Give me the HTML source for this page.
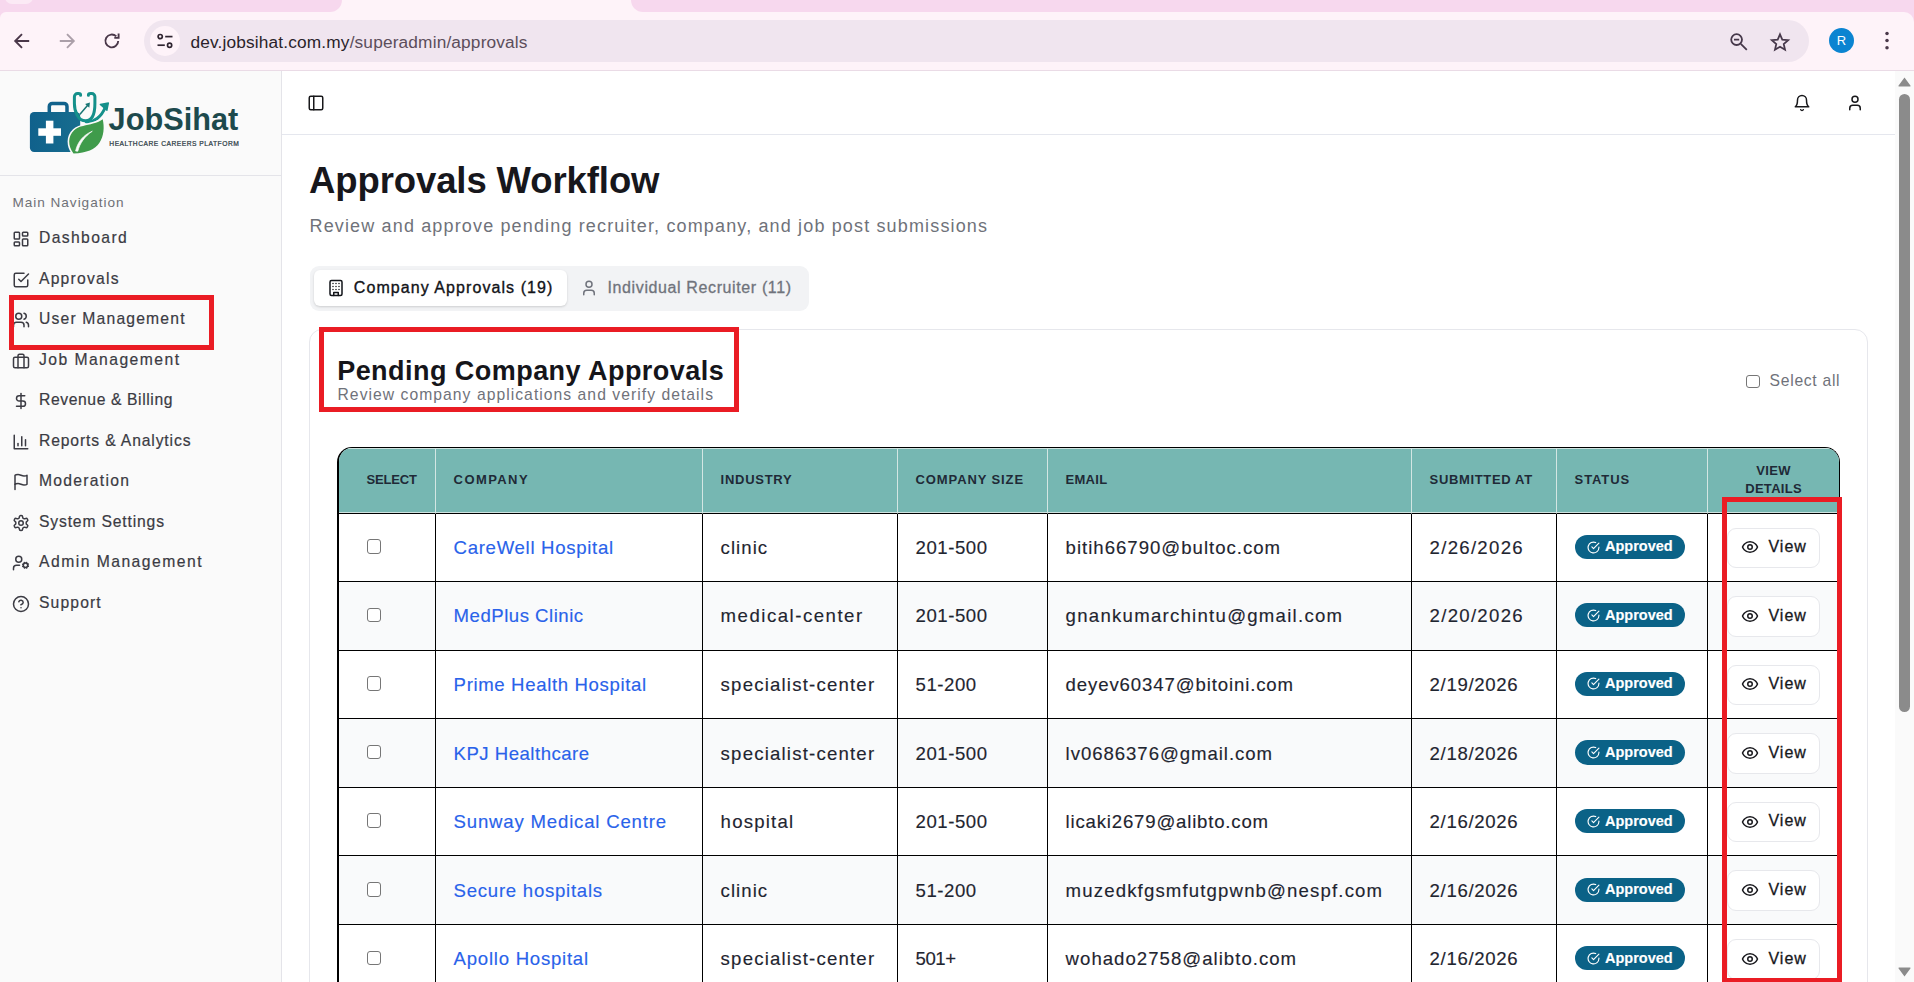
<!DOCTYPE html>
<html lang="en">
<head>
<meta charset="utf-8">
<title>Approvals Workflow - JobSihat</title>
<style>
*{box-sizing:border-box;margin:0;padding:0}
html,body{width:1914px;height:982px;overflow:hidden;background:#fff}
body{position:relative;font-family:"Liberation Sans",sans-serif;color:#1f2937;-webkit-font-smoothing:antialiased}
.abs{position:absolute}
svg{display:block}
.ic{fill:none;stroke:currentColor;stroke-width:2;stroke-linecap:round;stroke-linejoin:round}

/* ---------- browser chrome ---------- */
#tabstrip{left:0;top:0;width:1914px;height:26px;background:#f7d8ee}
#tabstrip .act{left:330px;top:-12px;width:313px;height:24px;background:#fef3f9}
#tabstrip .cl{left:318px;top:-12px;width:24px;height:24px;background:#f7d8ee;border-radius:0 0 12px 0}
#tabstrip .cr{left:631px;top:-12px;width:24px;height:24px;background:#f7d8ee;border-radius:0 0 0 12px}
#tabstrip .fav{left:5px;top:-10px;width:28px;height:14px;border-radius:7px;background:#fbeaf5}
#toolbar{left:0;top:12px;width:1914px;height:59px;background:#fef3f9;border-bottom:1px solid #eadbe6;border-radius:6px 10px 0 0}
#urlpill{left:144px;top:8px;width:1665px;height:42px;border-radius:21px;background:#f0e5ef}
#siteinfo{left:6px;top:6px;width:30px;height:30px;border-radius:15px;background:#fef3f9}
#url{left:46.5px;top:1.2px;height:42px;line-height:42px;font-size:17.3px;color:#2a1f2a;white-space:nowrap;letter-spacing:0}
#url span{color:#5c4e5b}
#avatar{left:1829px;top:16px;width:25px;height:25px;border-radius:50%;background:#0b84d1;color:#fff;font-size:13px;line-height:25px;text-align:center}

/* ---------- sidebar ---------- */
#sidebar{left:0;top:71px;width:282px;height:911px;background:#fafafa;border-right:1px solid #e4e4e9}
#logodiv{left:0;top:104px;width:281px;height:1px;background:#e4e4e9}
#navlabel{left:12.5px;top:123.6px;font-size:13.6px;line-height:16px;color:#6f7177;white-space:nowrap}
.nav{left:12px;height:24px;display:flex;align-items:center;color:#3b3b43;font-size:15.7px;-webkit-text-stroke:.2px #3b3b43;white-space:nowrap}
.nav svg{width:18px;height:18px;margin-right:9px;flex:none;position:relative;top:1.1px}
.nav span{display:block;line-height:24px;position:relative;top:0px}

/* ---------- header ---------- */
#header{left:282px;top:71px;width:1613px;height:64px;border-bottom:1px solid #e5e7ee;background:#fff}
#scroll{left:1895px;top:71px;width:19px;height:911px;background:#fafafa}
#thumb{left:4px;top:23px;width:11px;height:618px;border-radius:5.5px;background:#8b8b8b}

.redbox{border:5px solid #ea1c24;pointer-events:none}

/* ---------- main content (coords relative to #main at 282,135) ---------- */
.t{position:absolute;white-space:nowrap;display:block}
#h1{left:27px;top:23.9px;font-size:36.5px;line-height:44px;font-weight:700;color:#17171c}
#sub{left:27.5px;top:78.9px;font-size:18px;line-height:24px;color:#6f727a}
#tabs{left:27.5px;top:131px;width:499px;height:45px;border-radius:9px;background:#f2f3f5}
#tab1{left:4.5px;top:4px;width:253px;height:35.5px;border-radius:6px;background:#fff;box-shadow:0 1px 3px rgba(0,0,0,.10),0 1px 2px rgba(0,0,0,.06)}
#tab1t{left:44.3px;top:9.5px;font-size:16px;line-height:24px;color:#111318;-webkit-text-stroke:.35px #111318}
#tab2t{left:298px;top:9.5px;font-size:16px;line-height:24px;color:#70737c;-webkit-text-stroke:.3px #70737c}
#card{left:27px;top:193.6px;width:1559px;height:700px;border:1px solid #e6e7ec;border-radius:13px;background:#fff}
#h2{left:55.2px;top:218px;font-size:27px;line-height:36px;font-weight:700;color:#15151a}
#sub2{left:55.5px;top:249.2px;font-size:15.7px;line-height:22px;color:#6f727a}
#selall{left:1464px;top:239.5px;width:13.5px;height:13.5px;border:1.3px solid #767676;border-radius:3px;background:#fff}
#selallt{left:1487.6px;top:234px;font-size:15.7px;line-height:24px;color:#6f727a}

#tbl{left:55px;top:312px;width:1502.5px;height:700px;border:1.5px solid #000;border-left-width:2px;border-bottom:0;border-radius:15px 15px 0 0;overflow:hidden;background:#fff}
table{border-collapse:separate;border-spacing:0;table-layout:fixed;width:1500.1px}
th{background:#76b7b2;height:65.8px;border-right:1px solid #d3e6e3;border-bottom:1.5px solid #000;border-top:1px solid #cfe3e0;text-align:left;padding:0 0 0 17.5px;font-size:13px;line-height:18px;font-weight:700;color:#1f2a37;text-transform:uppercase;vertical-align:middle;position:relative;box-shadow:inset 0 -1px 0 #cfe3e0}
th:last-child,td:last-child{border-right:0}
th:first-child{padding-left:27.5px}
th span{position:relative;top:-.8px;display:inline-block;white-space:nowrap}
td{border-right:1.3px solid #000;border-bottom:1.3px solid #000;padding:0 0 0 17.5px;font-size:18.6px;color:#1f2530;-webkit-text-stroke:.15px currentColor;vertical-align:middle;position:relative;white-space:nowrap}
tr.alt td{background:#f9fafb}
td span.x{display:inline-block;position:relative;top:.6px}
td a{color:#2962ea;text-decoration:none}
.cb{position:absolute;left:27.5px;top:25.6px;width:14.5px;height:14.5px;border:1.3px solid #767676;border-radius:3px;background:#fff}
.badge{position:absolute;left:17.5px;top:21.2px;width:110px;height:24.2px;border-radius:13px;background:#0b6287;color:#fff;font-weight:700;font-size:14.5px;line-height:24px;white-space:nowrap}
.badge svg{position:absolute;left:12.3px;top:5.6px;width:13px;height:13px;stroke-width:2.1}
.badge span{position:absolute;left:30.5px;top:-.5px}
.vbtn{position:absolute;left:19px;top:14px;width:93px;height:40.5px;border:1px solid #e7e8ec;border-radius:9px;background:#fff;color:#17171c;font-size:16px;line-height:38px;white-space:nowrap}
.vbtn svg{position:absolute;left:12.5px;top:9.7px;width:18px;height:18px;stroke-width:2}
.vbtn span{position:absolute;left:40.3px;top:-.4px;-webkit-text-stroke:.3px #17171c}
/* fitted letter-spacing */
#n0t{letter-spacing:1.369px}
#n1t{letter-spacing:1.217px}
#n2t{letter-spacing:1.175px}
#n3t{letter-spacing:1.445px}
#n4t{letter-spacing:0.604px}
#n5t{letter-spacing:0.859px}
#n6t{letter-spacing:1.280px}
#n7t{letter-spacing:0.833px}
#n8t{letter-spacing:1.473px}
#n9t{letter-spacing:1.124px}
#h1{letter-spacing:-0.101px}
#sub{letter-spacing:1.150px}
#tab1t{letter-spacing:1.067px}
#tab2t{letter-spacing:0.618px}
#h2{letter-spacing:0.456px}
#sub2{letter-spacing:1.039px}
#selallt{letter-spacing:0.705px}
#th0{letter-spacing:-0.159px}
#th1{letter-spacing:1.419px}
#th2{letter-spacing:0.719px}
#th3{letter-spacing:0.885px}
#th4{letter-spacing:0.262px}
#th5{letter-spacing:0.652px}
#th6{letter-spacing:0.884px}
#th7{letter-spacing:0.307px}
#c0{letter-spacing:0.689px}
#i0{letter-spacing:1.034px}
#s0{letter-spacing:0.542px}
#e0{letter-spacing:0.995px}
#d0{letter-spacing:1.285px}
#b0{letter-spacing:-0.025px}
#v0{letter-spacing:1.036px}
#c1{letter-spacing:0.502px}
#i1{letter-spacing:1.504px}
#s1{letter-spacing:0.542px}
#e1{letter-spacing:1.260px}
#d1{letter-spacing:1.285px}
#b1{letter-spacing:-0.025px}
#v1{letter-spacing:1.036px}
#c2{letter-spacing:0.634px}
#i2{letter-spacing:1.197px}
#s2{letter-spacing:0.519px}
#e2{letter-spacing:0.877px}
#d2{letter-spacing:0.660px}
#b2{letter-spacing:-0.025px}
#v2{letter-spacing:1.036px}
#c3{letter-spacing:0.486px}
#i3{letter-spacing:1.197px}
#s3{letter-spacing:0.542px}
#e3{letter-spacing:0.949px}
#d3{letter-spacing:0.660px}
#b3{letter-spacing:-0.025px}
#v3{letter-spacing:1.036px}
#c4{letter-spacing:0.806px}
#i4{letter-spacing:1.201px}
#s4{letter-spacing:0.542px}
#e4{letter-spacing:0.809px}
#d4{letter-spacing:0.660px}
#b4{letter-spacing:-0.025px}
#v4{letter-spacing:1.036px}
#c5{letter-spacing:0.735px}
#i5{letter-spacing:1.034px}
#s5{letter-spacing:0.519px}
#e5{letter-spacing:1.147px}
#d5{letter-spacing:0.660px}
#b5{letter-spacing:-0.025px}
#v5{letter-spacing:1.036px}
#c6{letter-spacing:0.748px}
#i6{letter-spacing:1.197px}
#s6{letter-spacing:-0.464px}
#e6{letter-spacing:1.019px}
#d6{letter-spacing:0.660px}
#b6{letter-spacing:-0.025px}
#v6{letter-spacing:1.036px}
#url{letter-spacing:0.152px}
#navlabel{letter-spacing:0.965px}
</style>
</head>
<body>

<!-- ================= BROWSER CHROME ================= -->
<div id="tabstrip" class="abs">
  <div class="act abs"></div><div class="cl abs"></div><div class="cr abs"></div><div class="fav abs"></div>
</div>
<div id="toolbar" class="abs">
  <!-- back -->
  <svg class="abs" style="left:13px;top:20px" width="18" height="18" viewBox="0 0 18 18"><path d="M16.2 9H2.6M9 2.2 2.2 9 9 15.8" fill="none" stroke="#4a3749" stroke-width="1.9"/></svg>
  <!-- forward -->
  <svg class="abs" style="left:58px;top:20px" width="18" height="18" viewBox="0 0 18 18"><path d="M1.8 9h13.6M9 2.2 15.8 9 9 15.8" fill="none" stroke="#ab9fa9" stroke-width="1.9"/></svg>
  <!-- reload -->
  <svg class="abs" style="left:102px;top:19px" width="20" height="20" viewBox="0 0 20 20"><path d="M16.2 10a6.4 6.4 0 1 1-1.9-4.6" fill="none" stroke="#4a3749" stroke-width="1.9"/><path d="M16.6 2.6v4.3h-4.3" fill="none" stroke="#4a3749" stroke-width="1.9"/></svg>
  <div id="urlpill" class="abs">
    <div id="siteinfo" class="abs">
      <svg class="abs" style="left:6px;top:7px" width="18" height="16" viewBox="0 0 18 16"><g fill="none" stroke="#2f2430" stroke-width="1.7"><circle cx="4.2" cy="3.6" r="2.1"/><path d="M9.2 3.6h7.3"/><circle cx="13.6" cy="12.2" r="2.1"/><path d="M1.5 12.2h7.3"/></g></svg>
    </div>
    <div id="url" class="abs">dev.jobsihat.com.my<span>/superadmin/approvals</span></div>
    <!-- zoom out -->
    <svg class="abs" style="left:1585px;top:12px" width="20" height="20" viewBox="0 0 20 20"><g fill="none" stroke="#46384a" stroke-width="1.8"><circle cx="7.6" cy="7.6" r="5.4"/><path d="M11.8 11.8l6 6M5 7.6h5.2"/></g></svg>
    <!-- star -->
    <svg class="abs" style="left:1625px;top:11px" width="22" height="22" viewBox="0 0 24 24"><path d="M12 3.6l2.5 5.9 6.4.55-4.85 4.2 1.45 6.25L12 17.2l-5.5 3.3 1.45-6.25L3.1 10.05l6.4-.55z" fill="none" stroke="#46384a" stroke-width="1.9" stroke-linejoin="miter"/></svg>
  </div>
  <div id="avatar" class="abs">R</div>
  <svg class="abs" style="left:1883px;top:17px" width="8" height="24" viewBox="0 0 8 24"><g fill="#4a3749"><circle cx="4" cy="4.4" r="1.75"/><circle cx="4" cy="11.6" r="1.75"/><circle cx="4" cy="18.8" r="1.75"/></g></svg>
</div>

<!-- ================= SIDEBAR ================= -->
<div id="sidebar" class="abs">
  <svg id="logo" class="abs" style="left:0;top:0" width="281" height="104" viewBox="0 71 281 104">
    <defs><linearGradient id="bagg" x1="0" y1="0" x2="1" y2="0"><stop offset="0" stop-color="#10618c"/><stop offset="1" stop-color="#176d8e"/></linearGradient></defs>
    <!-- medical bag -->
    <path d="M49.300 113v-6.600a3 3 0 0 1 3-3h11.700a3 3 0 0 1 3 3V113" fill="none" stroke="#11628c" stroke-width="3.500"/>
    <rect x="29.900" y="111.900" width="50.300" height="40.100" rx="4.200" fill="url(#bagg)"/>
    <rect x="38.300" y="128.300" width="22.700" height="7.500" fill="#fff"/><rect x="45.900" y="120.700" width="7.500" height="22.800" fill="#fff"/>
    <!-- stethoscope + growth arrow -->
    <g fill="none" stroke="#14908a" stroke-width="3" stroke-linecap="round" stroke-linejoin="round">
      <path d="M80.600 95.300c0-1.300-.700-1.700-2-1.700h-1.100a3.100 3.100 0 0 0-3.100 3.100V103.500c0 8 3.700 17.300 11.200 17.300s9.300-9.300 9.300-17.300V96.700a3.100 3.100 0 0 0-3.100-3.100h-1.300c-1.400 0-2.100.400-2.100 1.700"/>
      <path d="M86.200 121.700c7.500 1.500 15.300-5.200 19-14.200"/>
    </g>
    <path d="M100.300 104.500 108.400 103 106.900 110.300z" fill="#14908a" stroke="#14908a" stroke-width="1.300" stroke-linejoin="round"/>
    <path d="M80.200 114 88.300 104.500" fill="none" stroke="#187674" stroke-width="1.500" stroke-linecap="round"/>
    <path d="M85.100 103.900 89.900 102.600 89.300 107.700z" fill="#187674"/>
    <!-- leaf -->
    <path d="M73.500 153.500C67.800 146 67.500 136.500 74.100 130.300 79 125.800 87 125.500 93 123.600 97 122.300 100.500 121 102.700 119.200 104.500 127 104 136 99.300 142.900 95 149.200 87 152.800 73.500 153.500z" fill="#3f9b4b" stroke="#fafafa" stroke-width="3.200" paint-order="stroke" stroke-linejoin="round"/>
    <path d="M75.600 151C77.600 142 83 135.200 92.300 131.200 84.500 136.700 80 142.800 77.800 151.200z" fill="#fafafa" stroke="#fafafa" stroke-width=".7" stroke-linejoin="round"/>
    <!-- wordmark -->
    <text x="108.600" y="129.900" font-family="'Liberation Sans',sans-serif" font-weight="700" font-size="31" fill="#1d4a4d" textLength="129.600" lengthAdjust="spacingAndGlyphs">JobSihat</text>
    <text x="109.300" y="145.900" font-family="'Liberation Sans',sans-serif" font-weight="400" font-size="6.700" fill="#2b3a44" stroke="#2b3a44" stroke-width=".22" textLength="129.500" lengthAdjust="spacing">HEALTHCARE CAREERS PLATFORM</text>
  </svg>

  <div id="logodiv" class="abs"></div>
  <div id="navlabel" class="abs">Main Navigation</div>
  <div class="nav abs" style="top:155.3px"><svg class="ic" viewBox="0 0 24 24"><rect width="7" height="9" x="3" y="3" rx="1"/><rect width="7" height="5" x="14" y="3" rx="1"/><rect width="7" height="9" x="14" y="12" rx="1"/><rect width="7" height="5" x="3" y="16" rx="1"/></svg><span id="n0t">Dashboard</span></div>
  <div class="nav abs" style="top:195.8px"><svg class="ic" viewBox="0 0 24 24"><path d="m9 11 3 3L22 4"/><path d="M21 12v7a2 2 0 0 1-2 2H5a2 2 0 0 1-2-2V5a2 2 0 0 1 2-2h11"/></svg><span id="n1t">Approvals</span></div>
  <div class="nav abs" style="top:236.3px"><svg class="ic" viewBox="0 0 24 24"><path d="M16 21v-2a4 4 0 0 0-4-4H6a4 4 0 0 0-4 4v2"/><circle cx="9" cy="7" r="4"/><path d="M22 21v-2a4 4 0 0 0-3-3.87"/><path d="M16 3.13a4 4 0 0 1 0 7.75"/></svg><span id="n2t">User Management</span></div>
  <div class="nav abs" style="top:276.8px"><svg class="ic" viewBox="0 0 24 24"><rect width="20" height="14" x="2" y="7" rx="2" ry="2"/><path d="M16 21V5a2 2 0 0 0-2-2h-4a2 2 0 0 0-2 2v16"/></svg><span id="n3t">Job Management</span></div>
  <div class="nav abs" style="top:317.3px"><svg class="ic" viewBox="0 0 24 24"><line x1="12" x2="12" y1="2" y2="22"/><path d="M17 5H9.5a3.5 3.5 0 0 0 0 7h5a3.5 3.5 0 0 1 0 7H6"/></svg><span id="n4t">Revenue &amp; Billing</span></div>
  <div class="nav abs" style="top:357.8px"><svg class="ic" viewBox="0 0 24 24"><path d="M3 3v18h18"/><path d="M18 17V9"/><path d="M13 17V5"/><path d="M8 17v-3"/></svg><span id="n5t">Reports &amp; Analytics</span></div>
  <div class="nav abs" style="top:398.3px"><svg class="ic" viewBox="0 0 24 24"><path d="M4 15s1-1 4-1 5 2 8 2 4-1 4-1V3s-1 1-4 1-5-2-8-2-4 1-4 1z"/><line x1="4" x2="4" y1="22" y2="15"/></svg><span id="n6t">Moderation</span></div>
  <div class="nav abs" style="top:438.8px"><svg class="ic" viewBox="0 0 24 24"><path d="M12.22 2h-.44a2 2 0 0 0-2 2v.18a2 2 0 0 1-1 1.73l-.43.25a2 2 0 0 1-2 0l-.15-.08a2 2 0 0 0-2.73.73l-.22.38a2 2 0 0 0 .73 2.73l.15.1a2 2 0 0 1 1 1.72v.51a2 2 0 0 1-1 1.74l-.15.09a2 2 0 0 0-.73 2.73l.22.38a2 2 0 0 0 2.73.73l.15-.08a2 2 0 0 1 2 0l.43.25a2 2 0 0 1 1 1.73V20a2 2 0 0 0 2 2h.44a2 2 0 0 0 2-2v-.18a2 2 0 0 1 1-1.73l.43-.25a2 2 0 0 1 2 0l.15.08a2 2 0 0 0 2.73-.73l.22-.39a2 2 0 0 0-.73-2.73l-.15-.08a2 2 0 0 1-1-1.74v-.5a2 2 0 0 1 1-1.74l.15-.09a2 2 0 0 0 .73-2.73l-.22-.38a2 2 0 0 0-2.73-.73l-.15.08a2 2 0 0 1-2 0l-.43-.25a2 2 0 0 1-1-1.73V4a2 2 0 0 0-2-2z"/><circle cx="12" cy="12" r="3"/></svg><span id="n7t">System Settings</span></div>
  <div class="nav abs" style="top:479.3px"><svg class="ic" viewBox="0 0 24 24"><circle cx="18" cy="15" r="3"/><circle cx="9" cy="7" r="4"/><path d="M10 15H6a4 4 0 0 0-4 4v2"/><path d="m21.7 16.4-.9-.3"/><path d="m15.2 13.9-.9-.3"/><path d="m16.6 18.7.3-.9"/><path d="m19.1 12.2.3-.9"/><path d="m19.6 18.7-.4-1"/><path d="m16.8 12.3-.4-1"/><path d="m14.3 16.6 1-.4"/><path d="m20.7 13.8 1-.4"/></svg><span id="n8t">Admin Management</span></div>
  <div class="nav abs" style="top:519.8px"><svg class="ic" viewBox="0 0 24 24"><circle cx="12" cy="12" r="10"/><path d="M9.09 9a3 3 0 0 1 5.83 1c0 2-3 3-3 3"/><path d="M12 17h.01"/></svg><span id="n9t">Support</span></div>
</div>

<!-- ================= HEADER ================= -->
<div id="header" class="abs">
  <svg class="abs ic" style="left:25px;top:23px;color:#18181b" width="18" height="18" viewBox="0 0 24 24"><rect width="18" height="18" x="3" y="3" rx="2"/><path d="M9 3v18"/></svg>
  <svg class="abs ic" style="left:1510.5px;top:22.5px;color:#18181b" width="18" height="18" viewBox="0 0 24 24"><path d="M6 8a6 6 0 0 1 12 0c0 7 3 9 3 9H3s3-2 3-9"/><path d="M10.3 21a1.94 1.94 0 0 0 3.4 0"/></svg>
  <svg class="abs ic" style="left:1563.5px;top:22.5px;color:#18181b" width="18" height="18" viewBox="0 0 24 24"><path d="M19 21v-2a4 4 0 0 0-4-4H9a4 4 0 0 0-4 4v2"/><circle cx="12" cy="7" r="4"/></svg>
</div>
<div id="scroll" class="abs">
  <svg class="abs" style="left:3px;top:6px" width="13" height="10" viewBox="0 0 13 10"><path d="M6.5 .6 12.4 8.6a.6.6 0 0 1-.5 1H1.1a.6.6 0 0 1-.5-1z" fill="#8b8b8b"/></svg>
  <div id="thumb" class="abs"></div>
  <svg class="abs" style="left:3px;top:896px" width="13" height="10" viewBox="0 0 13 10"><path d="M6.5 9.4 12.4 1.4a.6.6 0 0 0-.5-1H1.1a.6.6 0 0 0-.5 1z" fill="#8b8b8b"/></svg>
</div>

<!-- ================= MAIN ================= -->
<div id="main" class="abs" style="left:282px;top:135px;width:1613px;height:847px;overflow:hidden">
<span class="t" id="h1">Approvals Workflow</span>
<span class="t" id="sub">Review and approve pending recruiter, company, and job post submissions</span>
<div id="tabs" class="abs"><div id="tab1" class="abs"></div><svg class="abs ic" style="left:17.5px;top:13px;color:#111318;stroke-width:2" width="18" height="18" viewBox="0 0 24 24"><rect width="16" height="20" x="4" y="2" rx="2" ry="2"/><path d="M9 22v-4h6v4"/><path d="M8 6h.01"/><path d="M16 6h.01"/><path d="M12 6h.01"/><path d="M12 10h.01"/><path d="M12 14h.01"/><path d="M16 10h.01"/><path d="M16 14h.01"/><path d="M8 10h.01"/><path d="M8 14h.01"/></svg><span class="t" id="tab1t">Company Approvals (19)</span><svg class="abs ic" style="left:270.5px;top:13px;color:#70737c;stroke-width:2" width="18" height="18" viewBox="0 0 24 24"><path d="M19 21v-2a4 4 0 0 0-4-4H9a4 4 0 0 0-4 4v2"/><circle cx="12" cy="7" r="4"/></svg><span class="t" id="tab2t">Individual Recruiter (11)</span></div>
<div id="card" class="abs"></div>
<span class="t" id="h2">Pending Company Approvals</span>
<span class="t" id="sub2">Review company applications and verify details</span>
<div id="selall" class="abs"></div><span class="t" id="selallt">Select all</span>
<div id="tbl" class="abs"><table><colgroup><col style="width:97.1px"><col style="width:267px"><col style="width:195px"><col style="width:150px"><col style="width:364px"><col style="width:145px"><col style="width:151px"><col style="width:131px"></colgroup>
<thead><tr><th><span id="th0">Select</span></th><th><span id="th1">Company</span></th><th><span id="th2">Industry</span></th><th><span id="th3">Company Size</span></th><th><span id="th4">Email</span></th><th><span id="th5">Submitted At</span></th><th><span id="th6">Status</span></th><th style="text-align:center;padding:0"><span id="th7" style="top:-.8px;left:0px">View<br>Details</span></th></tr></thead><tbody>
<tr style="height:68.3px"><td><div class="cb"></div></td><td><a><span class="x" id="c0">CareWell Hospital</span></a></td><td><span class="x" id="i0">clinic</span></td><td><span class="x" id="s0">201-500</span></td><td><span class="x" id="e0">bitih66790@bultoc.com</span></td><td><span class="x" id="d0">2/26/2026</span></td><td><div class="badge"><svg class="ic" viewBox="0 0 24 24"><path d="M22 11.08V12a10 10 0 1 1-5.93-9.14"/><path d="m9 11 3 3L22 4"/></svg><span id="b0">Approved</span></div></td><td><div class="vbtn"><svg class="ic" viewBox="0 0 24 24"><path d="M2 12s3-7 10-7 10 7 10 7-3 7-10 7-10-7-10-7Z"/><circle cx="12" cy="12" r="3"/></svg><span id="v0">View</span></div></td></tr>
<tr class="alt" style="height:68.6px"><td><div class="cb"></div></td><td><a><span class="x" id="c1">MedPlus Clinic</span></a></td><td><span class="x" id="i1">medical-center</span></td><td><span class="x" id="s1">201-500</span></td><td><span class="x" id="e1">gnankumarchintu@gmail.com</span></td><td><span class="x" id="d1">2/20/2026</span></td><td><div class="badge"><svg class="ic" viewBox="0 0 24 24"><path d="M22 11.08V12a10 10 0 1 1-5.93-9.14"/><path d="m9 11 3 3L22 4"/></svg><span id="b1">Approved</span></div></td><td><div class="vbtn"><svg class="ic" viewBox="0 0 24 24"><path d="M2 12s3-7 10-7 10 7 10 7-3 7-10 7-10-7-10-7Z"/><circle cx="12" cy="12" r="3"/></svg><span id="v1">View</span></div></td></tr>
<tr style="height:68.6px"><td><div class="cb"></div></td><td><a><span class="x" id="c2">Prime Health Hospital</span></a></td><td><span class="x" id="i2">specialist-center</span></td><td><span class="x" id="s2">51-200</span></td><td><span class="x" id="e2">deyev60347@bitoini.com</span></td><td><span class="x" id="d2">2/19/2026</span></td><td><div class="badge"><svg class="ic" viewBox="0 0 24 24"><path d="M22 11.08V12a10 10 0 1 1-5.93-9.14"/><path d="m9 11 3 3L22 4"/></svg><span id="b2">Approved</span></div></td><td><div class="vbtn"><svg class="ic" viewBox="0 0 24 24"><path d="M2 12s3-7 10-7 10 7 10 7-3 7-10 7-10-7-10-7Z"/><circle cx="12" cy="12" r="3"/></svg><span id="v2">View</span></div></td></tr>
<tr class="alt" style="height:68.6px"><td><div class="cb"></div></td><td><a><span class="x" id="c3">KPJ Healthcare</span></a></td><td><span class="x" id="i3">specialist-center</span></td><td><span class="x" id="s3">201-500</span></td><td><span class="x" id="e3">lv0686376@gmail.com</span></td><td><span class="x" id="d3">2/18/2026</span></td><td><div class="badge"><svg class="ic" viewBox="0 0 24 24"><path d="M22 11.08V12a10 10 0 1 1-5.93-9.14"/><path d="m9 11 3 3L22 4"/></svg><span id="b3">Approved</span></div></td><td><div class="vbtn"><svg class="ic" viewBox="0 0 24 24"><path d="M2 12s3-7 10-7 10 7 10 7-3 7-10 7-10-7-10-7Z"/><circle cx="12" cy="12" r="3"/></svg><span id="v3">View</span></div></td></tr>
<tr style="height:68.6px"><td><div class="cb"></div></td><td><a><span class="x" id="c4">Sunway Medical Centre</span></a></td><td><span class="x" id="i4">hospital</span></td><td><span class="x" id="s4">201-500</span></td><td><span class="x" id="e4">licaki2679@alibto.com</span></td><td><span class="x" id="d4">2/16/2026</span></td><td><div class="badge"><svg class="ic" viewBox="0 0 24 24"><path d="M22 11.08V12a10 10 0 1 1-5.93-9.14"/><path d="m9 11 3 3L22 4"/></svg><span id="b4">Approved</span></div></td><td><div class="vbtn"><svg class="ic" viewBox="0 0 24 24"><path d="M2 12s3-7 10-7 10 7 10 7-3 7-10 7-10-7-10-7Z"/><circle cx="12" cy="12" r="3"/></svg><span id="v4">View</span></div></td></tr>
<tr class="alt" style="height:68.6px"><td><div class="cb"></div></td><td><a><span class="x" id="c5">Secure hospitals</span></a></td><td><span class="x" id="i5">clinic</span></td><td><span class="x" id="s5">51-200</span></td><td><span class="x" id="e5">muzedkfgsmfutgpwnb@nespf.com</span></td><td><span class="x" id="d5">2/16/2026</span></td><td><div class="badge"><svg class="ic" viewBox="0 0 24 24"><path d="M22 11.08V12a10 10 0 1 1-5.93-9.14"/><path d="m9 11 3 3L22 4"/></svg><span id="b5">Approved</span></div></td><td><div class="vbtn"><svg class="ic" viewBox="0 0 24 24"><path d="M2 12s3-7 10-7 10 7 10 7-3 7-10 7-10-7-10-7Z"/><circle cx="12" cy="12" r="3"/></svg><span id="v5">View</span></div></td></tr>
<tr style="height:68.6px"><td><div class="cb"></div></td><td><a><span class="x" id="c6">Apollo Hospital</span></a></td><td><span class="x" id="i6">specialist-center</span></td><td><span class="x" id="s6">501+</span></td><td><span class="x" id="e6">wohado2758@alibto.com</span></td><td><span class="x" id="d6">2/16/2026</span></td><td><div class="badge"><svg class="ic" viewBox="0 0 24 24"><path d="M22 11.08V12a10 10 0 1 1-5.93-9.14"/><path d="m9 11 3 3L22 4"/></svg><span id="b6">Approved</span></div></td><td><div class="vbtn"><svg class="ic" viewBox="0 0 24 24"><path d="M2 12s3-7 10-7 10 7 10 7-3 7-10 7-10-7-10-7Z"/><circle cx="12" cy="12" r="3"/></svg><span id="v6">View</span></div></td></tr>
</tbody></table></div>
</div>

<div class="redbox abs" style="left:9px;top:295px;width:205px;height:55px"></div>
<div class="redbox abs" style="left:319px;top:327px;width:420px;height:85px"></div>
<div class="redbox abs" style="left:1722px;top:497px;width:120px;height:486px"></div>
</body>
</html>
